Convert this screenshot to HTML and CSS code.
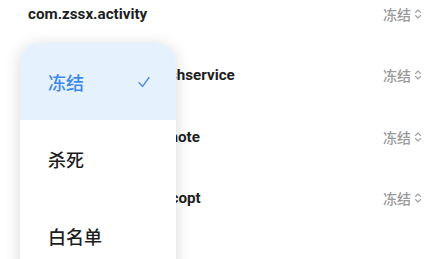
FILE: index.html
```html
<!DOCTYPE html>
<html>
<head>
<meta charset="utf-8">
<link rel="stylesheet" href="styles.css">
</head>
<body>
<div class="screen">
  <div class="list">
    <div class="row"><span class="pkg">com.zssx.activity</span><span class="state">冻结<svg class="updown" viewBox="0 0 8 12" width="8" height="12"><path d="M1.5 4.5 L4 2 L6.5 4.5 M1.5 7.5 L4 10 L6.5 7.5" fill="none" stroke="#a0a0a0" stroke-width="1.1" stroke-linecap="round" stroke-linejoin="round"/></svg></span></div>
    <div class="row"><span class="pkg">com.zssx.launchr.pushservice</span><span class="state">冻结<svg class="updown" viewBox="0 0 8 12" width="8" height="12"><path d="M1.5 4.5 L4 2 L6.5 4.5 M1.5 7.5 L4 10 L6.5 7.5" fill="none" stroke="#a0a0a0" stroke-width="1.1" stroke-linecap="round" stroke-linejoin="round"/></svg></span></div>
    <div class="row"><span class="pkg">com.zssx.note.quicknote</span><span class="state">冻结<svg class="updown" viewBox="0 0 8 12" width="8" height="12"><path d="M1.5 4.5 L4 2 L6.5 4.5 M1.5 7.5 L4 10 L6.5 7.5" fill="none" stroke="#a0a0a0" stroke-width="1.1" stroke-linecap="round" stroke-linejoin="round"/></svg></span></div>
    <div class="row"><span class="pkg">com.zssx.shop.recptcopt</span><span class="state">冻结<svg class="updown" viewBox="0 0 8 12" width="8" height="12"><path d="M1.5 4.5 L4 2 L6.5 4.5 M1.5 7.5 L4 10 L6.5 7.5" fill="none" stroke="#a0a0a0" stroke-width="1.1" stroke-linecap="round" stroke-linejoin="round"/></svg></span></div>
  </div>
  <div class="menu">
    <div class="item selected"><span>冻结</span><svg class="check" viewBox="0 0 12 12" width="12" height="12"><path d="M1 6.5 L4.5 10.5 L11 1.5" fill="none" stroke="#4a8de4" stroke-width="1.3" stroke-linecap="round" stroke-linejoin="round"/></svg></div>
    <div class="item"><span>杀死</span></div>
    <div class="item"><span>白名单</span></div>
  </div>
</div>
</body>
</html>
```
FILE: styles.css
```css
html, body {
  margin: 0;
  padding: 0;
  background: #ffffff;
}
body {
  width: 444px;
  height: 259px;
  overflow: hidden;
}
.screen {
  position: relative;
  width: 444px;
  height: 259px;
  overflow: hidden;
  font-family: Roboto, "Noto Sans CJK SC", sans-serif;
}
.list {
  margin-top: -17px;
}
.row {
  height: 61.5px;
  display: flex;
  align-items: center;
  justify-content: space-between;
  padding: 0 22px 0 28px;
}
.pkg {
  font-size: 15.2px;
  font-weight: 700;
  color: #1e1e1e;
}
.state {
  display: flex;
  align-items: center;
  gap: 3px;
  font-size: 14px;
  font-weight: 500;
  color: #9a9a9a;
  font-family: "Noto Sans CJK SC", sans-serif;
}
.updown {
  display: block;
}
.menu {
  position: absolute;
  left: 20px;
  top: 43px;
  width: 156px;
  height: 250px;
  background: #ffffff;
  border-radius: 20px;
  box-shadow: 0 2px 16px rgba(0, 0, 0, 0.16);
  overflow: hidden;
}
.item {
  height: 77px;
  display: flex;
  align-items: center;
  justify-content: space-between;
  padding: 0 26px 0 28px;
  font-family: "Noto Sans CJK SC", sans-serif;
  font-size: 18px;
  font-weight: 500;
  color: #1e1e1e;
}
.item.selected {
  background: #e5f1fd;
  color: #3e88e6;
}
.check {
  display: block;
}
```
